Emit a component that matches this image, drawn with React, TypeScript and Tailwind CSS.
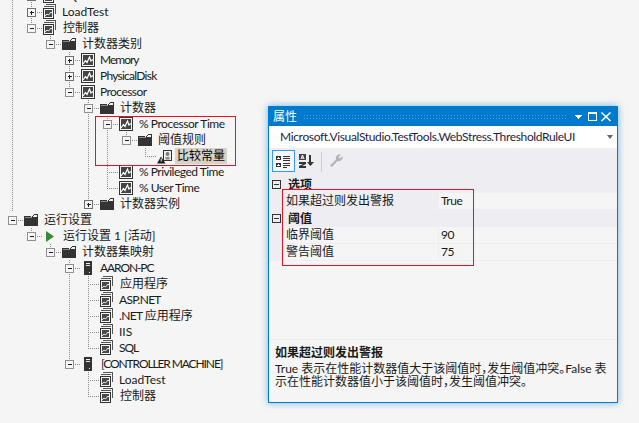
import React from "react";

type Kind = "multi" | "folder" | "counter" | "play" | "server" | "rule";
type Row = { l: number; k: Kind; t: React.ReactNode; e?: "+" | "-"; hl?: boolean; c?: string };

const rows: Row[] = [
  { l: 1, k: "multi", t: "SQL", e: "+", c: "ml-[4px] tracking-[-1px]" },
  { l: 1, k: "multi", t: "LoadTest", e: "+", c: "ml-[4px]" },
  { l: 1, k: "multi", t: "控制器", e: "-" },
  { l: 2, k: "folder", t: "计数器类别", e: "-" },
  { l: 3, k: "counter", t: "Memory", e: "+", c: "ml-[4px] tracking-[-1px]" },
  { l: 3, k: "counter", t: "PhysicalDisk", e: "+", c: "ml-[4px] tracking-[-0.75px]" },
  { l: 3, k: "counter", t: "Processor", e: "-", c: "ml-[4px] tracking-[-0.55px]" },
  { l: 4, k: "folder", t: "计数器", e: "-" },
  { l: 5, k: "counter", t: "% Processor Time", e: "-", c: "ml-[5px] tracking-[-0.45px]" },
  { l: 6, k: "folder", t: "阈值规则", e: "-" },
  { l: 7, k: "rule", t: "比较常量", hl: true },
  { l: 5, k: "counter", t: "% Privileged Time", c: "ml-[5px] tracking-[-0.5px]" },
  { l: 5, k: "counter", t: "% User Time", c: "ml-[5px] tracking-[-0.5px]" },
  { l: 4, k: "folder", t: "计数器实例", e: "+" },
  { l: 0, k: "folder", t: "运行设置", e: "-" },
  { l: 1, k: "play", t: "运行设置 1 [活动]", e: "-" },
  { l: 2, k: "folder", t: "计数器集映射", e: "-" },
  { l: 3, k: "server", t: "AARON-PC", e: "-", c: "ml-[4px] tracking-[-1.1px]" },
  { l: 4, k: "multi", t: "应用程序" },
  { l: 4, k: "multi", t: "ASP.NET", c: "ml-[4px] tracking-[-0.7px]" },
  {
    l: 4,
    k: "multi",
    t: (
      <>
        <span className="tracking-[-0.6px]">.NET </span>应用程序
      </>
    ),
    c: "ml-[4px]",
  },
  { l: 4, k: "multi", t: "IIS", c: "ml-[4px]" },
  { l: 4, k: "multi", t: "SQL", c: "ml-[4px] tracking-[-1px]" },
  { l: 3, k: "server", t: "[CONTROLLER MACHINE]", e: "-", c: "ml-[5px] tracking-[-1.1px]" },
  { l: 4, k: "multi", t: "LoadTest", c: "ml-[4px]" },
  { l: 4, k: "multi", t: "控制器" },
];

const lx = (l: number) => 12 + 19 * l;

function continues(i: number, level: number) {
  for (let j = i + 1; j < rows.length; j++) {
    if (rows[j].l < level) return false;
    if (rows[j].l === level) return true;
  }
  return false;
}

function Icon({ k }: { k: Kind }) {
  const dark = "#333333";
  if (k === "folder")
    return (
      <svg width="15" height="16" viewBox="0 0 15 16" shapeRendering="crispEdges">
        <path d="M0 5h14v9H0z" fill={dark} />
        <path d="M0 4h7v1h1V4h1V3h1V2h4v3H8v1H0z" fill={dark} />
        <path d="M10 3h3v1h-3zM9 4h4v1H9z" fill="#f5f5f5" />
        <path d="M1 5h7v1H1z" fill="#8a8a8a" />
      </svg>
    );
  if (k === "counter")
    return (
      <svg width="15" height="16" viewBox="0 0 15 16">
        <rect x="0.500" y="1.500" width="13" height="13" fill="#f5f5f5" stroke={dark} />
        <rect x="2" y="3" width="10" height="10" fill="#444" />
        <path d="M2 12l2.500-3.500 1.500 2L8.500 5l1.500 4 2-1.500" fill="none" stroke="#fff" strokeWidth="1.200" />
      </svg>
    );
  if (k === "multi")
    return (
      <svg width="15" height="16" viewBox="0 0 15 16" shapeRendering="crispEdges">
        <path d="M3 0h10v10h-1V1H3z" fill="#555" />
        <path d="M1 2h10v1H1z" fill="#555" />
        <rect x="0.500" y="4.500" width="10" height="10" fill="#f5f5f5" stroke={dark} />
        <rect x="2" y="6" width="7" height="7" fill="#484848" />
        <path d="M2 12l2-2 1.500 1L8 8l1 1" fill="none" stroke="#eee" shapeRendering="auto" />
      </svg>
    );
  if (k === "play")
    return (
      <svg width="15" height="16" viewBox="0 0 15 16">
        <path d="M3 3v11l8-5.500z" fill="#388a34" />
      </svg>
    );
  if (k === "server")
    return (
      <svg width="15" height="16" viewBox="0 0 15 16" shapeRendering="crispEdges">
        <rect x="3" y="1" width="8" height="14" fill={dark} />
        <rect x="5" y="3" width="4" height="1" fill="#eee" />
        <rect x="5" y="5" width="4" height="1" fill="#eee" />
        <rect x="8" y="12" width="1" height="1" fill="#eee" />
      </svg>
    );
  return (
    <svg width="15" height="16" viewBox="0 0 15 16">
      <rect x="6.500" y="2.500" width="8" height="10" fill="#eee" stroke={dark} />
      <circle cx="10.500" cy="6" r="1.900" fill="#777" />
      <rect x="8.500" y="9" width="4" height="2.500" fill="#888" />
      <path d="M4 8.500L0 15.500h8.500z" fill="#1e1e1e" />
      <rect x="3.700" y="10.500" width="1" height="3" fill="#fff" />
    </svg>
  );
}

function Guides({ i, r }: { i: number; r: Row }) {
  const w = lx(r.l) + 12;
  const lines: React.ReactNode[] = [];
  for (let l = 0; l <= r.l; l++) {
    const x = lx(l) + 0.5;
    if (continues(i, l)) {
      lines.push(<line key={l} x1={x} x2={x} y1={0} y2={16} stroke="#8a8a8a" strokeDasharray="1 1" />);
    } else if (l === r.l && i > 0 && r.l > 0) {
      lines.push(<line key={l} x1={x} x2={x} y1={0} y2={8} stroke="#8a8a8a" strokeDasharray="1 1" />);
    }
  }
  const x = lx(r.l);
  return (
    <svg width={w} height="16" className="shrink-0">
      {lines}
      <line x1={x} x2={w} y1={8.5} y2={8.5} stroke="#8a8a8a" strokeDasharray="1 1" />
      {r.e && (
        <g shapeRendering="crispEdges">
          <rect x={x - 3.5} y={4.5} width={8} height={8} fill="#f5f5f5" stroke={r.e === "+" ? "#707070" : "#909090"} />
          <line x1={x - 1.5} x2={x + 2.5} y1={8.5} y2={8.5} stroke="#1e1e1e" />
          {r.e === "+" && <line x1={x + 0.5} x2={x + 0.5} y1={6.5} y2={10.5} stroke="#1e1e1e" />}
        </g>
      )}
    </svg>
  );
}

function Tree() {
  return (
    <div className="-mt-3 flex flex-col">
      {rows.map((r, i) => (
        <div key={i} className="flex h-4 items-center whitespace-nowrap text-[12px] leading-4 text-[#1a1a1a]">
          <Guides i={i} r={r} />
          <Icon k={r.k} />
          <span className={r.hl ? "ml-[3px] h-4 bg-[#d6d2c8] px-0.5 text-black" : r.c ?? "ml-[5px]"}>{r.t}</span>
        </div>
      ))}
    </div>
  );
}

function Prop({ name, value, selected }: { name: string; value: string; selected?: boolean }) {
  return (
    <div className="flex h-[17px] items-stretch">
      <div className="w-[15px] shrink-0 bg-[#eeeef2]" />
      <div
        className={
          selected
            ? "w-[154px] shrink-0 border-b border-[#f0f0f2] bg-[#eeeef2] pl-[2px] leading-[16px]"
            : "w-[154px] shrink-0 border-b border-[#eeeef2] bg-[#f5f5f5] pl-[2px] leading-[16px]"
        }
      >
        {name}
      </div>
      <div className="w-0 flex-1 border-b border-l border-[#eeeef2] bg-[#f5f5f5] pl-[2px] leading-[16px] tracking-[-0.4px]">
        {value}
      </div>
    </div>
  );
}

function Cat({ name }: { name: string }) {
  return (
    <div className="flex h-[17px] items-center bg-[#eeeef2]">
      <div className="flex w-[15px] shrink-0 justify-center">
        <svg width="9" height="9" shapeRendering="crispEdges">
          <rect x="0.500" y="0.500" width="8" height="8" fill="none" stroke="#333" />
          <line x1="2" x2="7" y1="4.500" y2="4.500" stroke="#333" />
        </svg>
      </div>
      <span className="pl-[4px] font-bold">{name}</span>
    </div>
  );
}

function PropsPanel() {
  return (
    <div className="absolute left-[268px] top-[106px] flex h-[297px] w-[350px] flex-col border border-[#007acc] bg-[#f5f5f5] text-[12px] leading-4 text-[#1a1a1a] shadow-[0_0_7px_rgba(0,122,204,0.55)]">
      <div className="flex h-[19px] shrink-0 items-center bg-[#007acc] pl-[4px] pr-[6px] text-white">
        <span className="shrink-0">属性</span>
        <div className="ml-[6px] mr-[7px] h-[5px] flex-1 bg-[radial-gradient(#52a9e2_0.7px,transparent_0.9px)] bg-[length:3px_3px]" />
        <svg width="36" height="10" viewBox="0 0 36 10" className="shrink-0" shapeRendering="crispEdges">
          <path d="M0 3h7v1H6v1H5v1H4v1H3V6H2V5H1V4H0z" fill="#fff" />
          <rect x="13.500" y="0.500" width="8" height="8" fill="none" stroke="#fff" />
          <rect x="13" y="0" width="9" height="2" fill="#fff" />
          <path d="M26.500 0.500l9 8.500M35.500 0.500l-9 8.500" stroke="#fff" strokeWidth="1.500" shapeRendering="auto" />
        </svg>
      </div>
      <div className="flex h-[22px] shrink-0 items-center justify-between bg-white pl-[11px] pr-[4px] text-[#1e1e3c]">
        <span className="tracking-[-0.35px]">Microsoft.VisualStudio.TestTools.WebStress.ThresholdRuleUI</span>
        <svg width="6" height="4" className="shrink-0">
          <path d="M0 0h6L3 4z" fill="#666" />
        </svg>
      </div>
      <div className="flex h-[28px] shrink-0 items-start gap-[3px] bg-[#eeeef2] pl-[3px] pt-[2px]">
        <div className="flex h-[22px] w-[23px] items-center justify-center border border-[#3399ff] bg-[#f7f7f9]">
          <svg width="15" height="13" shapeRendering="crispEdges">
            <path d="M0 1h5v4H0zM0 8h5v4H0z" fill="#333" />
            <path d="M1 3h3M1 10h3M2.500 2v2M2.500 9v2" stroke="#fff" />
            <path d="M7 1.500h7M7 3.500h7M7 5.500h7M7 8.500h7M7 10.500h7M7 12.500h4" stroke="#333" />
          </svg>
        </div>
        <svg width="16" height="16" className="mt-[3px] shrink-0">
          <path d="M1 1h7v6H1z" fill="#444" />
          <path d="M3 6l1.500-4 1.500 4M3.500 5h2" stroke="#fff" fill="none" />
          <path d="M1 9h7v2L4 13h4v2H1v-2l4-2H1z" fill="#333" />
          <path d="M12 2v10" stroke="#333" strokeWidth="2" />
          <path d="M9 9h7l-3.500 4z" fill="#333" />
        </svg>
        <div className="ml-[4px] mt-[2px] h-[20px] w-px bg-[#ccced8]" />
        <svg width="14" height="15" className="ml-[4px] mt-[3px] shrink-0">
          <path d="M1 12.500l6-6a4 4 0 0 1 5-5L9.500 4l1.500 1.500L13.500 3a4 4 0 0 1-5 5l-5.500 6z" fill="#b4b4b4" />
        </svg>
      </div>
      <div className="flex flex-col">
        <Cat name="选项" />
        <Prop name="如果超过则发出警报" value="True" selected />
        <Cat name="阈值" />
        <Prop name="临界阈值" value="90" />
        <Prop name="警告阈值" value="75" />
      </div>
      <div className="mt-[78px] flex flex-1 flex-col border-t border-[#eeeef2] px-[6px] pt-[5px]">
        <div className="font-bold">如果超过则发出警报</div>
        <div className="mt-px whitespace-nowrap leading-[13px] [font-feature-settings:'halt']">
          <div>True 表示在性能计数器值大于该阈值时，发生阈值冲突。False 表</div>
          <div>示在性能计数器值小于该阈值时，发生阈值冲突。</div>
        </div>
      </div>
    </div>
  );
}

export default function App() {
  return (
    <div
      className="relative h-[423px] w-[639px] overflow-hidden bg-[#f5f5f5]"
      style={{ fontFamily: 'Lato, "Noto Sans CJK SC", sans-serif' }}
    >
      <Tree />
      <div className="absolute left-[95px] top-[116px] h-[50px] w-[141px] border border-[#e81123]" />
      <PropsPanel />
      <div className="absolute left-[282px] top-[189px] h-[77px] w-[192px] border border-[#e81123]" />
    </div>
  );
}
